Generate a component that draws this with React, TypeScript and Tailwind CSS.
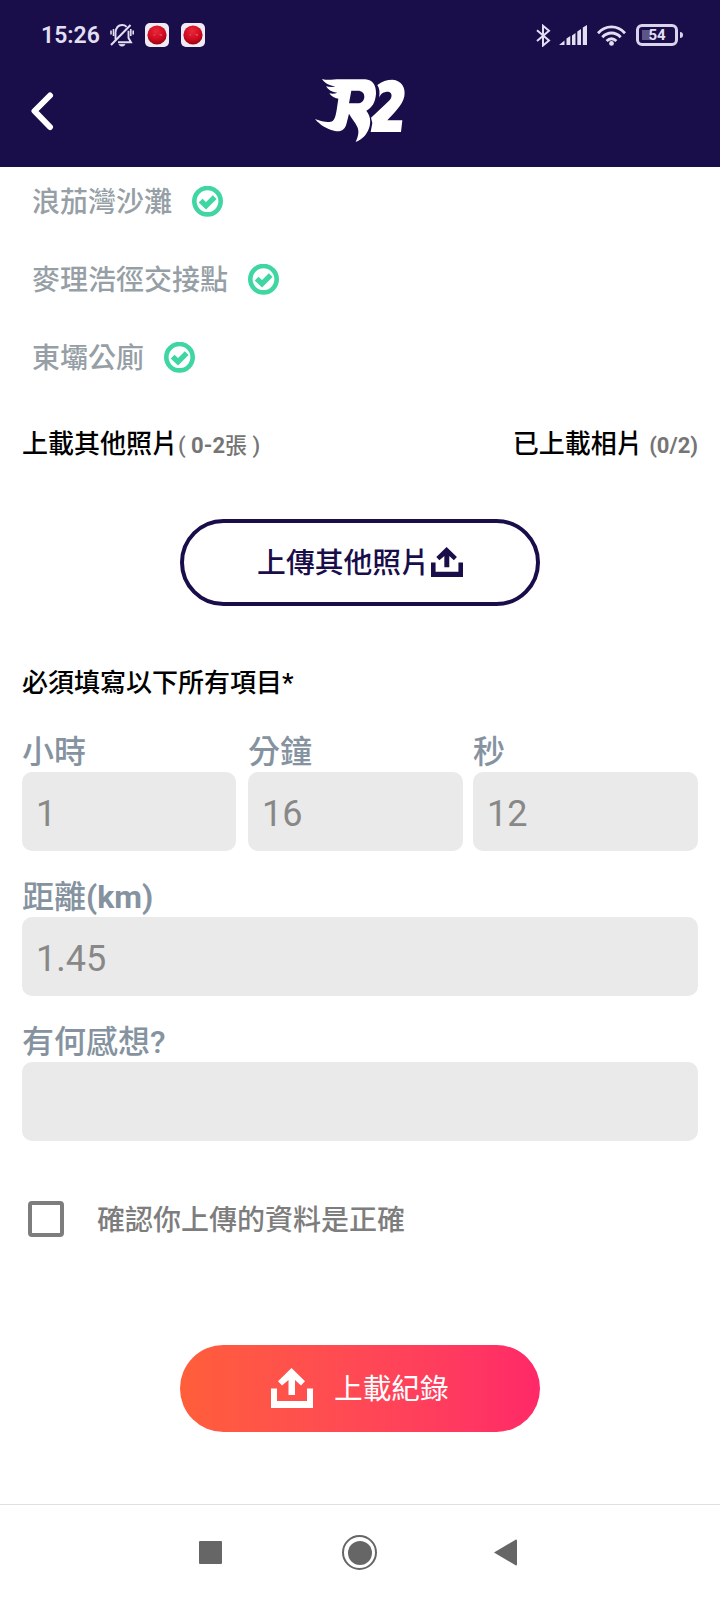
import { clsx } from 'clsx';

const checkpoints = ['浪茄灣沙灘', '麥理浩徑交接點', '東壩公廁'];

const durationFields = [
  { label: '小時', value: '1', width: 'w-[214px]' },
  { label: '分鐘', value: '16', width: 'w-[215px] ml-0.5' },
  { label: '秒', value: '12', width: 'w-[225px]' },
];

function CheckCircle() {
  return (
    <svg width="31" height="31" viewBox="0 0 31 31" fill="none">
      <circle cx="15.5" cy="15.2" r="13.2" stroke="#3fd6a2" strokeWidth="4.6" />
      <path d="M8.600 14.600l5.400 5.200 8.700-8.600" stroke="#3fd6a2" strokeWidth="5.4" />
    </svg>
  );
}

function UploadIcon({ className }: { className?: string }) {
  return (
    <svg className={className} viewBox="0 0 42 40" fill="currentColor" preserveAspectRatio="none">
      <path d="M0 20.500h6V33h30V20.500h6V40H0z" />
      <path d="M20.500 0L34 13.300l-4 4.200L24 12V27h-6.500V12L11 17.500 7 13.300z" />
    </svg>
  );
}

function AppBadge() {
  return (
    <svg width="24" height="24" viewBox="0 0 24 24">
      <defs>
        <radialGradient id="ball" cx="0.45" cy="0.3" r="0.75">
          <stop offset="0" stopColor="#e8283a" />
          <stop offset="0.6" stopColor="#cf0a1e" />
          <stop offset="1" stopColor="#8e0010" />
        </radialGradient>
      </defs>
      <rect width="24" height="24" rx="5" fill="#eeebf5" />
      <circle cx="12" cy="12" r="9.6" fill="url(#ball)" />
      <path d="M8.500 12h1.500M14.500 11l1.500 1.500M16.200 11v1.800" stroke="#f08a94" strokeWidth="0.6" />
    </svg>
  );
}

function StatusBar() {
  return (
    <div className="h-[70px] flex items-center justify-between pl-[41px] pr-[37px] text-[#e3dff2]">
      <div className="flex items-center">
        <span className="w-[69px] text-[23px] leading-none font-semibold">15:26</span>
        <svg className="mr-[11px]" width="24" height="24" viewBox="0 0 24 24" fill="none" stroke="currentColor" strokeWidth="1.9">
          <path d="M1 22L20.500 2" strokeWidth="2" />
          <path d="M5.500 16.500V9.500C6 5 8.500 2 12 2c2 0 3.500.6 4.600 1.800M18.500 7.800V15l2.500 4.300H8" />
          <path d="M3.500 6v7M1 7.500v4M20.800 6v7M23.200 7.500v4" strokeWidth="1.6" />
          <path d="M9 21.500h6L13.500 23h-3z" fill="currentColor" strokeWidth="0.8" />
        </svg>
        <div className="flex gap-3">
          <AppBadge />
          <AppBadge />
        </div>
      </div>
      <div className="flex items-center">
        <svg className="mr-2" width="15" height="23" viewBox="0 0 15 23" fill="none" stroke="currentColor" strokeWidth="2">
          <path d="M1 6.200L13 16.500l-6 5V1.800l6 5L1 17" />
        </svg>
        <svg className="mr-[10px]" width="28" height="20" viewBox="0 0 28 20" fill="currentColor">
          <path d="M0 20l5.500-4.500V20zM7.500 13.500l3.800-2.500v9H7.500zM13 10.500L16.500 8v12H13zM18.300 6.500l3.700-2.500v16h-3.700zM23.800 2.500L28 0v20h-4.200z" />
        </svg>
        <svg className="mr-[10px]" width="29" height="21" viewBox="0 0 29 21" fill="none" stroke="currentColor" strokeWidth="2.800">
          <path d="M1 8.200C8.500-.2 20.500-.2 28 8.200M5.300 12.200c5.300-5.600 13.100-5.600 18.400 0M9.600 16c3-3 6.800-3 9.800 0" />
          <circle cx="14.500" cy="18.400" r="2.400" fill="currentColor" stroke="none" />
        </svg>
        <div className="relative w-[42px] h-[22px] rounded-[6px] border-[3px] border-[#d9d4ec] flex items-center justify-center">
          <span className="absolute left-[3px] top-[3px] w-[9px] h-[10px] bg-[#5d5585]" />
          <span className="relative text-[15px] leading-none font-bold">54</span>
        </div>
        <span className="ml-[2px] w-[3px] h-[6px] rounded-r-sm bg-[#d9d4ec]" />
      </div>
    </div>
  );
}

function Logo() {
  return (
    <svg width="140" height="97" viewBox="0 0 420 291" fill="#fff">
      <path
        fillRule="evenodd"
        d="M96 48C112 53 128 49 150 49H226C248 50 259 68 258 92C256 118 246 134 229 143C241 158 244 176 237 196C230 216 216 230 197 237C205 218 208 206 202 192C196 178 186 168 177 152L170 180C165 202 150 209 132 203C110 198 90 186 75 168C98 177 118 180 128 174C138 166 140 140 145 107C132 105 124 100 118 91C128 93 136 92 142 89C126 88 115 81 108 70C120 73 130 73 136 70C118 68 104 60 96 48ZM184 83L177 121H202C215 121 223 112 223 101C223 90 216 83 203 83Z"
      />
      <path d="M262 66C276 55 290 50 308 50C334 52 348 74 343 100C338 126 312 150 292 172H337L333 207H242L247 180L243 164C262 146 284 126 300 110C308 100 306 87 294 86C280 86 272 92 267 104C270 90 269 76 262 66Z" />
    </svg>
  );
}

function Field({ label, unit, value, width }: { label: string; unit?: string; value: string; width?: string }) {
  return (
    <div className={clsx('flex flex-col', width)}>
      <label className="h-[42px] pt-0.5 flex items-center text-[32px] leading-none font-medium text-[#8593a0] whitespace-nowrap">
        {label}
        {unit && <b>({unit})</b>}
      </label>
      <div className="h-[79px] rounded-[10px] bg-[#eaeaea] pl-[14px] pt-[5px] flex items-center text-[36px] leading-none text-[#888888]">
        {value}
      </div>
    </div>
  );
}

export default function App() {
  return (
    <div className="w-[720px] h-[1600px] bg-white overflow-hidden flex flex-col font-['Roboto','Noto_Sans_CJK_TC',sans-serif]">
      <header className="h-[167px] shrink-0 bg-[#190d4a]">
        <StatusBar />
        <div className="h-[97px] grid grid-cols-[1fr_140px_1fr]">
          <svg className="ml-[30px] mt-[21px]" width="26" height="40" viewBox="0 0 26 40" fill="none" stroke="#fff" strokeWidth="6" strokeLinecap="round" strokeLinejoin="round">
            <path d="M20 4.500L4.500 20 20 36" />
          </svg>
          <div className="-mt-[7px]">
            <Logo />
          </div>
        </div>
      </header>

      <main className="flex-1 flex flex-col">
        {/* Checkpoints */}
        <ul className="pt-[18px] pl-8 flex flex-col gap-[46px]">
          {checkpoints.map(name => (
            <li key={name} className="h-8 flex items-center gap-5 text-[28px] leading-none font-medium text-[#979fa6]">
              <span className="pt-[3px]">{name}</span>
              <CheckCircle />
            </li>
          ))}
        </ul>

        <div className="mt-[51px] h-10 px-[22px] flex items-center justify-between text-[26px] leading-none font-medium text-black">
          <p>
            上載其他照片<span className="text-[22px] text-[#757575]">( <b>0-2</b>張 )</span>
          </p>
          <p>
            已上載相片 <span className="text-[22px] font-bold text-[#757575]">(0/2)</span>
          </p>
        </div>

        <button className="mt-[55px] h-[87px] w-[360px] self-center rounded-full border-4 border-[#190d4a] flex items-center justify-center text-[28.800px] leading-none text-[#190d4a]">
          <span className="pt-0.5 font-medium">上傳其他照片</span>
          <UploadIcon className="w-8 h-[30px] ml-px -mt-px" />
        </button>

        {/* Record form */}
        <p className="mt-[57px] h-10 pl-[22px] flex items-center text-[26px] leading-none font-medium text-black">必須填寫以下所有項目*</p>
        <div className="mt-[27px] px-[22px] flex flex-col gap-6">
          <div className="flex justify-between">
            {durationFields.map(field => (
              <Field key={field.label} {...field} />
            ))}
          </div>
          <Field label="距離" unit="km" value="1.45" />
          <Field label="有何感想?" value="" />
        </div>

        <div className="mt-[60px] h-9 pl-7 flex items-center gap-[33px]">
          <span className="w-9 h-9 rounded-[4px] border-4 border-[#7d7d7d]" />
          <span className="pt-[3px] text-[28px] leading-none font-medium text-[#7d7d7d]">確認你上傳的資料是正確</span>
        </div>

        <button className="mt-[108px] h-[87px] w-[360px] self-center rounded-full bg-linear-to-r from-[#ff5e3a] to-[#ff2868] flex items-center pl-[91px] gap-[21px] text-[28.700px] leading-none text-white">
          <UploadIcon className="w-[42px] h-10 -mt-px" />
          <span className="pt-px">上載紀錄</span>
        </button>
      </main>

      {/* System navigation */}
      <nav className="h-24 shrink-0 border-t border-[#e0e0e0] flex items-center pl-[199px] text-[#666666]">
        <span className="w-[23px] h-[23px] rounded-[1px] bg-[#666666]" />
        <span className="ml-[120px] w-[35px] h-[35px] rounded-full border-[2.500px] border-[#666666] flex items-center justify-center">
          <span className="w-6 h-6 rounded-full bg-[#666666]" />
        </span>
        <svg className="ml-[117px]" width="23" height="27" viewBox="0 0 23 27" fill="currentColor">
          <path d="M0 13.500L22 .5q1 0 1 1v24q0 1-1 1z" />
        </svg>
      </nav>
    </div>
  );
}
